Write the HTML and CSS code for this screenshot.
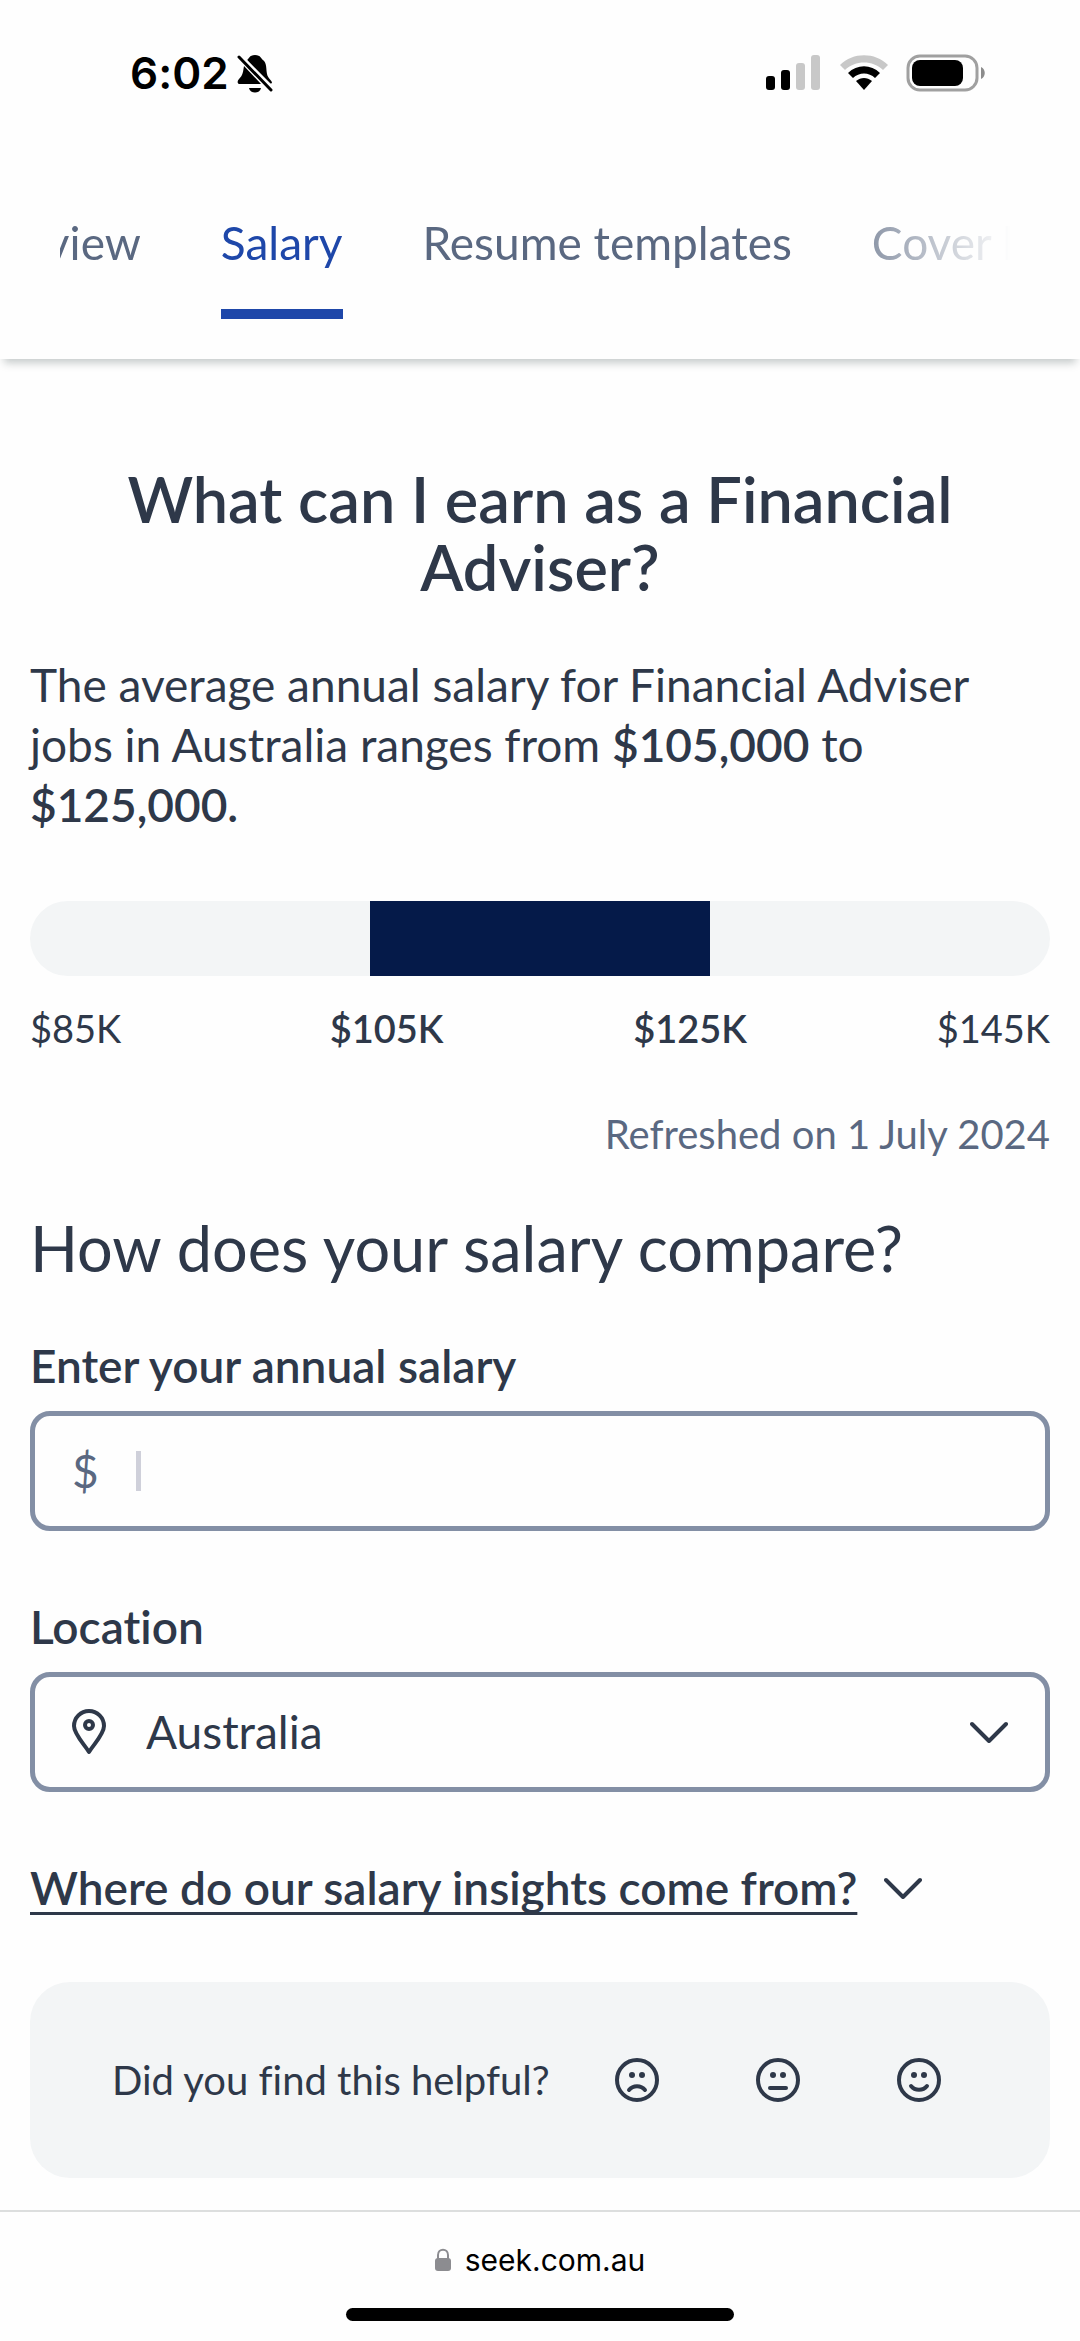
FILE: index.html
```html
<!DOCTYPE html>
<html lang="en">
<head>
    <meta charset="UTF-8">
    <meta name="viewport" content="width=device-width, initial-scale=1.0">
    <link rel="stylesheet" href="styles.css">
    <title>Financial Adviser salary</title>
</head>
<body>
    <div class="statusBar">
        <div class="clock">
            <span>6:02</span>
            <svg class="bell" viewBox="0 0 36 40" width="36" height="40">
                <path d="M10 7 C12 6 12 2 18 2 C24 2 24 6 26 7 C30 10 29 16 30 21 C31 26 35 27 35 30 L33 31 Z"/>
                <path d="M7 13 L24 31 L3 31 C0 31 0 28 2 26 C6 22 6 19 7 13 Z"/>
                <path d="M12 35 H24 C23 41 13 41 12 35 Z"/>
                <path class="slashGap" d="M5 4 L36 35"/>
                <path class="slash" d="M2 4 L34 37"/>
            </svg>
        </div>
        <div class="statusIcons">
            <svg width="56" height="36" viewBox="0 0 56 36">
                <rect x="0" y="21" width="9" height="14" rx="3"/>
                <rect x="15" y="15" width="9" height="20" rx="3"/>
                <rect class="dim" x="30" y="8" width="9" height="27" rx="3"/>
                <rect class="dim" x="45" y="0" width="9" height="35" rx="3"/>
            </svg>
            <svg width="48" height="36" viewBox="0 0 48 36">
                <path class="dim" d="M0 10 C13 -3 35 -3 48 10 L43 15 C33 5 15 5 5 15 Z"/>
                <path d="M8 18 C17 9 31 9 40 18 L35 23 C29 17 19 17 13 23 Z"/>
                <path d="M16 26 C21 22 27 22 32 26 L24 35 Z"/>
            </svg>
            <svg width="80" height="38" viewBox="0 0 80 38">
                <rect class="batteryCase" x="2" y="2" width="69" height="34" rx="12"/>
                <rect x="6" y="6" width="51" height="26" rx="8"/>
                <path class="batteryTip" d="M75 13 C80 15 80 23 75 25 Z"/>
            </svg>
        </div>
    </div>

    <header class="tabBar">
        <nav class="tabs">
            <a class="tab" href="#overview">Overview</a>
            <a class="tab active" href="#salary">Salary</a>
            <a class="tab" href="#resume">Resume templates</a>
            <a class="tab" href="#cover">Cover letter</a>
        </nav>
    </header>

    <main class="content">
        <h1>What can I earn as a Financial Adviser?</h1>
        <p class="intro">The average annual salary for Financial Adviser jobs in Australia ranges from <strong>$105,000</strong> to <strong>$125,000.</strong></p>

        <div class="rangeBar"><div class="rangeFill"></div></div>
        <div class="rangeLabels">
            <span>$85K</span>
            <strong>$105K</strong>
            <strong>$125K</strong>
            <span>$145K</span>
        </div>
        <p class="refreshed">Refreshed on 1 July 2024</p>

        <h2>How does your salary compare?</h2>

        <form class="compareForm">
            <div class="field">
                <label for="salary">Enter your annual salary</label>
                <div class="control">
                    <span class="prefix">$</span>
                    <span class="caret"></span>
                    <input id="salary" type="text" inputmode="numeric">
                </div>
            </div>
            <div class="field">
                <label for="location">Location</label>
                <div class="control">
                    <svg class="pin" width="34" height="46" viewBox="0 0 34 46">
                        <path d="M17 43 C12 35 2 25 2 17 A15 15 0 0 1 32 17 C32 25 22 35 17 43 Z"/>
                        <circle cx="17" cy="16" r="4"/>
                    </svg>
                    <select id="location">
                        <option>Australia</option>
                    </select>
                    <svg class="chevron" width="38" height="22" viewBox="0 0 38 22">
                        <path d="M2 3 L19 20 L36 3"/>
                    </svg>
                </div>
            </div>
        </form>

        <button class="insights" type="button">
            <span>Where do our salary insights come from?</span>
            <svg class="chevron" width="38" height="22" viewBox="0 0 38 22">
                <path d="M2 3 L19 20 L36 3"/>
            </svg>
        </button>

        <section class="helpful">
            <p>Did you find this helpful?</p>
            <div class="faces">
                <button type="button" aria-label="No">
                    <svg class="face" width="44" height="44" viewBox="0 0 44 44">
                        <circle cx="22" cy="22" r="20"/>
                        <circle class="eye" cx="17" cy="17" r="3"/>
                        <circle class="eye" cx="27" cy="17" r="3"/>
                        <path d="M14 32 C18 27 26 27 30 32"/>
                    </svg>
                </button>
                <button type="button" aria-label="Somewhat">
                    <svg class="face" width="44" height="44" viewBox="0 0 44 44">
                        <circle cx="22" cy="22" r="20"/>
                        <circle class="eye" cx="17" cy="17" r="3"/>
                        <circle class="eye" cx="27" cy="17" r="3"/>
                        <path d="M14 30 H30"/>
                    </svg>
                </button>
                <button type="button" aria-label="Yes">
                    <svg class="face" width="44" height="44" viewBox="0 0 44 44">
                        <circle cx="22" cy="22" r="20"/>
                        <circle class="eye" cx="17" cy="17" r="3"/>
                        <circle class="eye" cx="27" cy="17" r="3"/>
                        <path d="M14 28 C18 33 26 33 30 28"/>
                    </svg>
                </button>
            </div>
        </section>
    </main>

    <footer class="addressBar">
        <div class="address">
            <svg width="16" height="24" viewBox="0 0 16 24">
                <rect x="0" y="10" width="16" height="13" rx="3"/>
                <path d="M3 11 V7 C3 0 13 0 13 7 V11"/>
            </svg>
            <span>seek.com.au</span>
        </div>
        <div class="homeBar"></div>
    </footer>
</body>
</html>
```

FILE: styles.css
```css
:root {
    --text: #2e3849;
    --text-muted: #5a6881;
    --link: #1e47a9;
    --navy: #051a49;
    --surface: #f3f5f6;
    --border: #838fa5;
}

* {
    box-sizing: border-box;
}

body {
    margin: 0;
    min-height: 100vh;
    display: flex;
    flex-direction: column;
    font-family: Lato, sans-serif;
    font-size: 46px;
    line-height: 60px;
    font-variant-ligatures: none;
    color: var(--text);
    background-color: #fefefe;
}

h1,
h2,
p {
    margin: 0;
}

h1,
strong,
.field label,
.insights {
    font-weight: 600;
}

button,
input,
select {
    font: inherit;
    color: inherit;
    border: none;
    background: none;
    padding: 0;
}

/* status bar */
.statusBar {
    display: flex;
    justify-content: space-between;
    align-items: center;
    height: 146px;
    padding: 0 94px 0 130px;
    font-family: Inter, sans-serif;
    font-size: 44px;
    font-weight: 600;
    color: #000;
}

.clock {
    display: flex;
    align-items: center;
    gap: 8px;
}

.slash {
    stroke: #000;
    stroke-width: 3;
    stroke-linecap: round;
}

.slashGap {
    stroke: #fefefe;
    stroke-width: 3;
}

.statusIcons {
    display: flex;
    align-items: center;
    gap: 18px;
}

.dim {
    fill: #c8c8c8;
}

.batteryCase {
    fill: none;
    stroke: #a0a0a0;
    stroke-width: 3;
}

.batteryTip {
    fill: #8c8c8c;
}

/* tabs */
.tabBar {
    padding: 0 60px;
    height: 213px;
    box-shadow: 0 8px 8px -4px rgba(30, 50, 50, 0.25);
}

.tabs {
    display: flex;
    gap: 80px;
    overflow: hidden;
    -webkit-mask-image: linear-gradient(to right, #000 78%, transparent 99%);
    mask-image: linear-gradient(to right, #000 78%, transparent 99%);
}

.tab {
    flex: none;
    padding: 67px 0 36px;
    border-bottom: 10px solid transparent;
    color: var(--text-muted);
    text-decoration: none;
    white-space: nowrap;
}

.tab:first-child {
    margin-left: -115px;
}

.tab.active {
    color: var(--link);
    border-color: var(--link);
}

/* salary */
.content {
    flex: 1;
    padding: 106px 30px 32px;
}

h1 {
    font-size: 63px;
    line-height: 68px;
    text-align: center;
}

.intro {
    margin-top: 54px;
}

.rangeBar {
    display: flex;
    justify-content: center;
    height: 75px;
    margin-top: 66px;
    border-radius: 38px;
    background-color: var(--surface);
}

.rangeFill {
    width: 33.33%;
    background-color: var(--navy);
}

.rangeLabels {
    display: flex;
    justify-content: space-between;
    margin-top: 22px;
    font-size: 38px;
}

.rangeLabels span {
    min-width: 110px;
}

.refreshed {
    margin-top: 46px;
    font-size: 40px;
    text-align: right;
    color: var(--text-muted);
}

h2 {
    margin-top: 44px;
    font-size: 63px;
    line-height: 80px;
    font-weight: 400;
}

.compareForm {
    display: flex;
    flex-direction: column;
    gap: 66px;
    margin-top: 48px;
}

.field {
    display: flex;
    flex-direction: column;
    gap: 15px;
}

.control {
    display: flex;
    align-items: center;
    height: 120px;
    padding: 0 37px;
    border: 5px solid var(--border);
    border-radius: 20px;
}

.control input {
    flex: 1;
    outline: none;
}

.prefix {
    color: var(--text-muted);
}

.caret {
    width: 5px;
    height: 40px;
    margin-left: 37px;
    background-color: #cfd0da;
}

.control select {
    flex: 1;
    margin-left: 40px;
    appearance: none;
}

.pin,
.chevron,
.face {
    display: block;
    fill: none;
    stroke: var(--text);
    stroke-width: 4;
    stroke-linecap: round;
    stroke-linejoin: round;
}

.insights {
    display: flex;
    align-items: center;
    gap: 27px;
    margin-top: 66px;
}

.insights span {
    text-decoration: underline;
    text-decoration-thickness: 3px;
    text-decoration-skip-ink: none;
    text-underline-offset: 7px;
}

.helpful {
    display: flex;
    align-items: center;
    justify-content: space-between;
    height: 196px;
    margin-top: 64px;
    padding: 0 109px 0 82px;
    border-radius: 40px;
    background-color: var(--surface);
    font-size: 40px;
}

.faces {
    display: flex;
    gap: 97px;
}

.face .eye {
    fill: var(--text);
    stroke: none;
}

/* browser bar */
.addressBar {
    display: flex;
    flex-direction: column;
    align-items: center;
    justify-content: space-between;
    height: 131px;
    padding: 18px 0 20px;
    border-top: 2px solid #dcdede;
    font-family: Inter, sans-serif;
    font-size: 30px;
    color: #000;
}

.address {
    display: flex;
    align-items: center;
    gap: 14px;
}

.address svg rect {
    fill: #8c8c90;
}

.address svg path {
    fill: none;
    stroke: #8c8c90;
    stroke-width: 2;
}

.homeBar {
    width: 36%;
    height: 13px;
    border-radius: 7px;
    background-color: #000;
}
```
